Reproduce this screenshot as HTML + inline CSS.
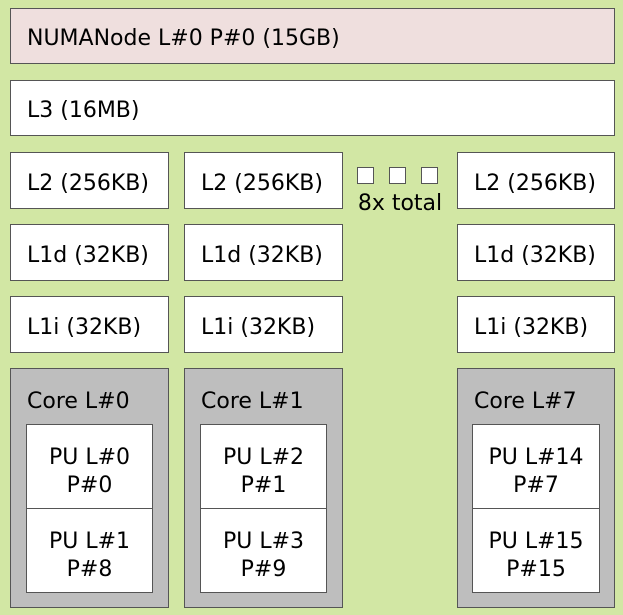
<!DOCTYPE html>
<html><head><style>
body{margin:0;width:623px;height:615px;background:#d2e7a4;position:relative;overflow:hidden;font-family:"DejaVu Sans","Liberation Sans",sans-serif;font-size:22px;color:#000}
.b{position:absolute;box-sizing:border-box;border:1px solid #555;background:#fff}
.c{display:flex;align-items:center;padding-left:16px;padding-top:5px}
.core{background:#bebebe}
.core span{position:absolute;left:16px;top:20px}
.pu{display:flex;align-items:center;justify-content:center;text-align:center;line-height:28px;padding-top:10px}
.sq{position:absolute;width:17px;height:17px;box-sizing:border-box;border:1px solid #555;background:#fff;top:167px}
</style></head><body>
<div class="b c" style="left:10px;top:8px;width:605px;height:56px;background:#efdfde">NUMANode L#0 P#0 (15GB)</div>
<div class="b c" style="left:10px;top:80px;width:605px;height:56px">L3 (16MB)</div>

<div class="b c" style="left:10px;top:152px;width:159px;height:57px">L2 (256KB)</div>
<div class="b c" style="left:184px;top:152px;width:159px;height:57px">L2 (256KB)</div>
<div class="b c" style="left:457px;top:152px;width:158px;height:57px">L2 (256KB)</div>

<div class="b c" style="left:10px;top:224px;width:159px;height:57px">L1d (32KB)</div>
<div class="b c" style="left:184px;top:224px;width:159px;height:57px">L1d (32KB)</div>
<div class="b c" style="left:457px;top:224px;width:158px;height:57px">L1d (32KB)</div>

<div class="b c" style="left:10px;top:296px;width:159px;height:57px">L1i (32KB)</div>
<div class="b c" style="left:184px;top:296px;width:159px;height:57px">L1i (32KB)</div>
<div class="b c" style="left:457px;top:296px;width:158px;height:57px">L1i (32KB)</div>

<div class="sq" style="left:357px"></div>
<div class="sq" style="left:389px"></div>
<div class="sq" style="left:421px"></div>
<div style="position:absolute;left:350px;top:191px;width:100px;text-align:center">8x total</div>

<div class="b core" style="left:10px;top:368px;width:159px;height:240px"><span>Core L#0</span></div>
<div class="b pu" style="left:26px;top:424px;width:127px;height:85px">PU L#0<br>P#0</div>
<div class="b pu" style="left:26px;top:508px;width:127px;height:85px">PU L#1<br>P#8</div>

<div class="b core" style="left:184px;top:368px;width:159px;height:240px"><span>Core L#1</span></div>
<div class="b pu" style="left:200px;top:424px;width:127px;height:85px">PU L#2<br>P#1</div>
<div class="b pu" style="left:200px;top:508px;width:127px;height:85px">PU L#3<br>P#9</div>

<div class="b core" style="left:457px;top:368px;width:158px;height:240px"><span>Core L#7</span></div>
<div class="b pu" style="left:472px;top:424px;width:128px;height:85px">PU L#14<br>P#7</div>
<div class="b pu" style="left:472px;top:508px;width:128px;height:85px">PU L#15<br>P#15</div>
</body></html>
